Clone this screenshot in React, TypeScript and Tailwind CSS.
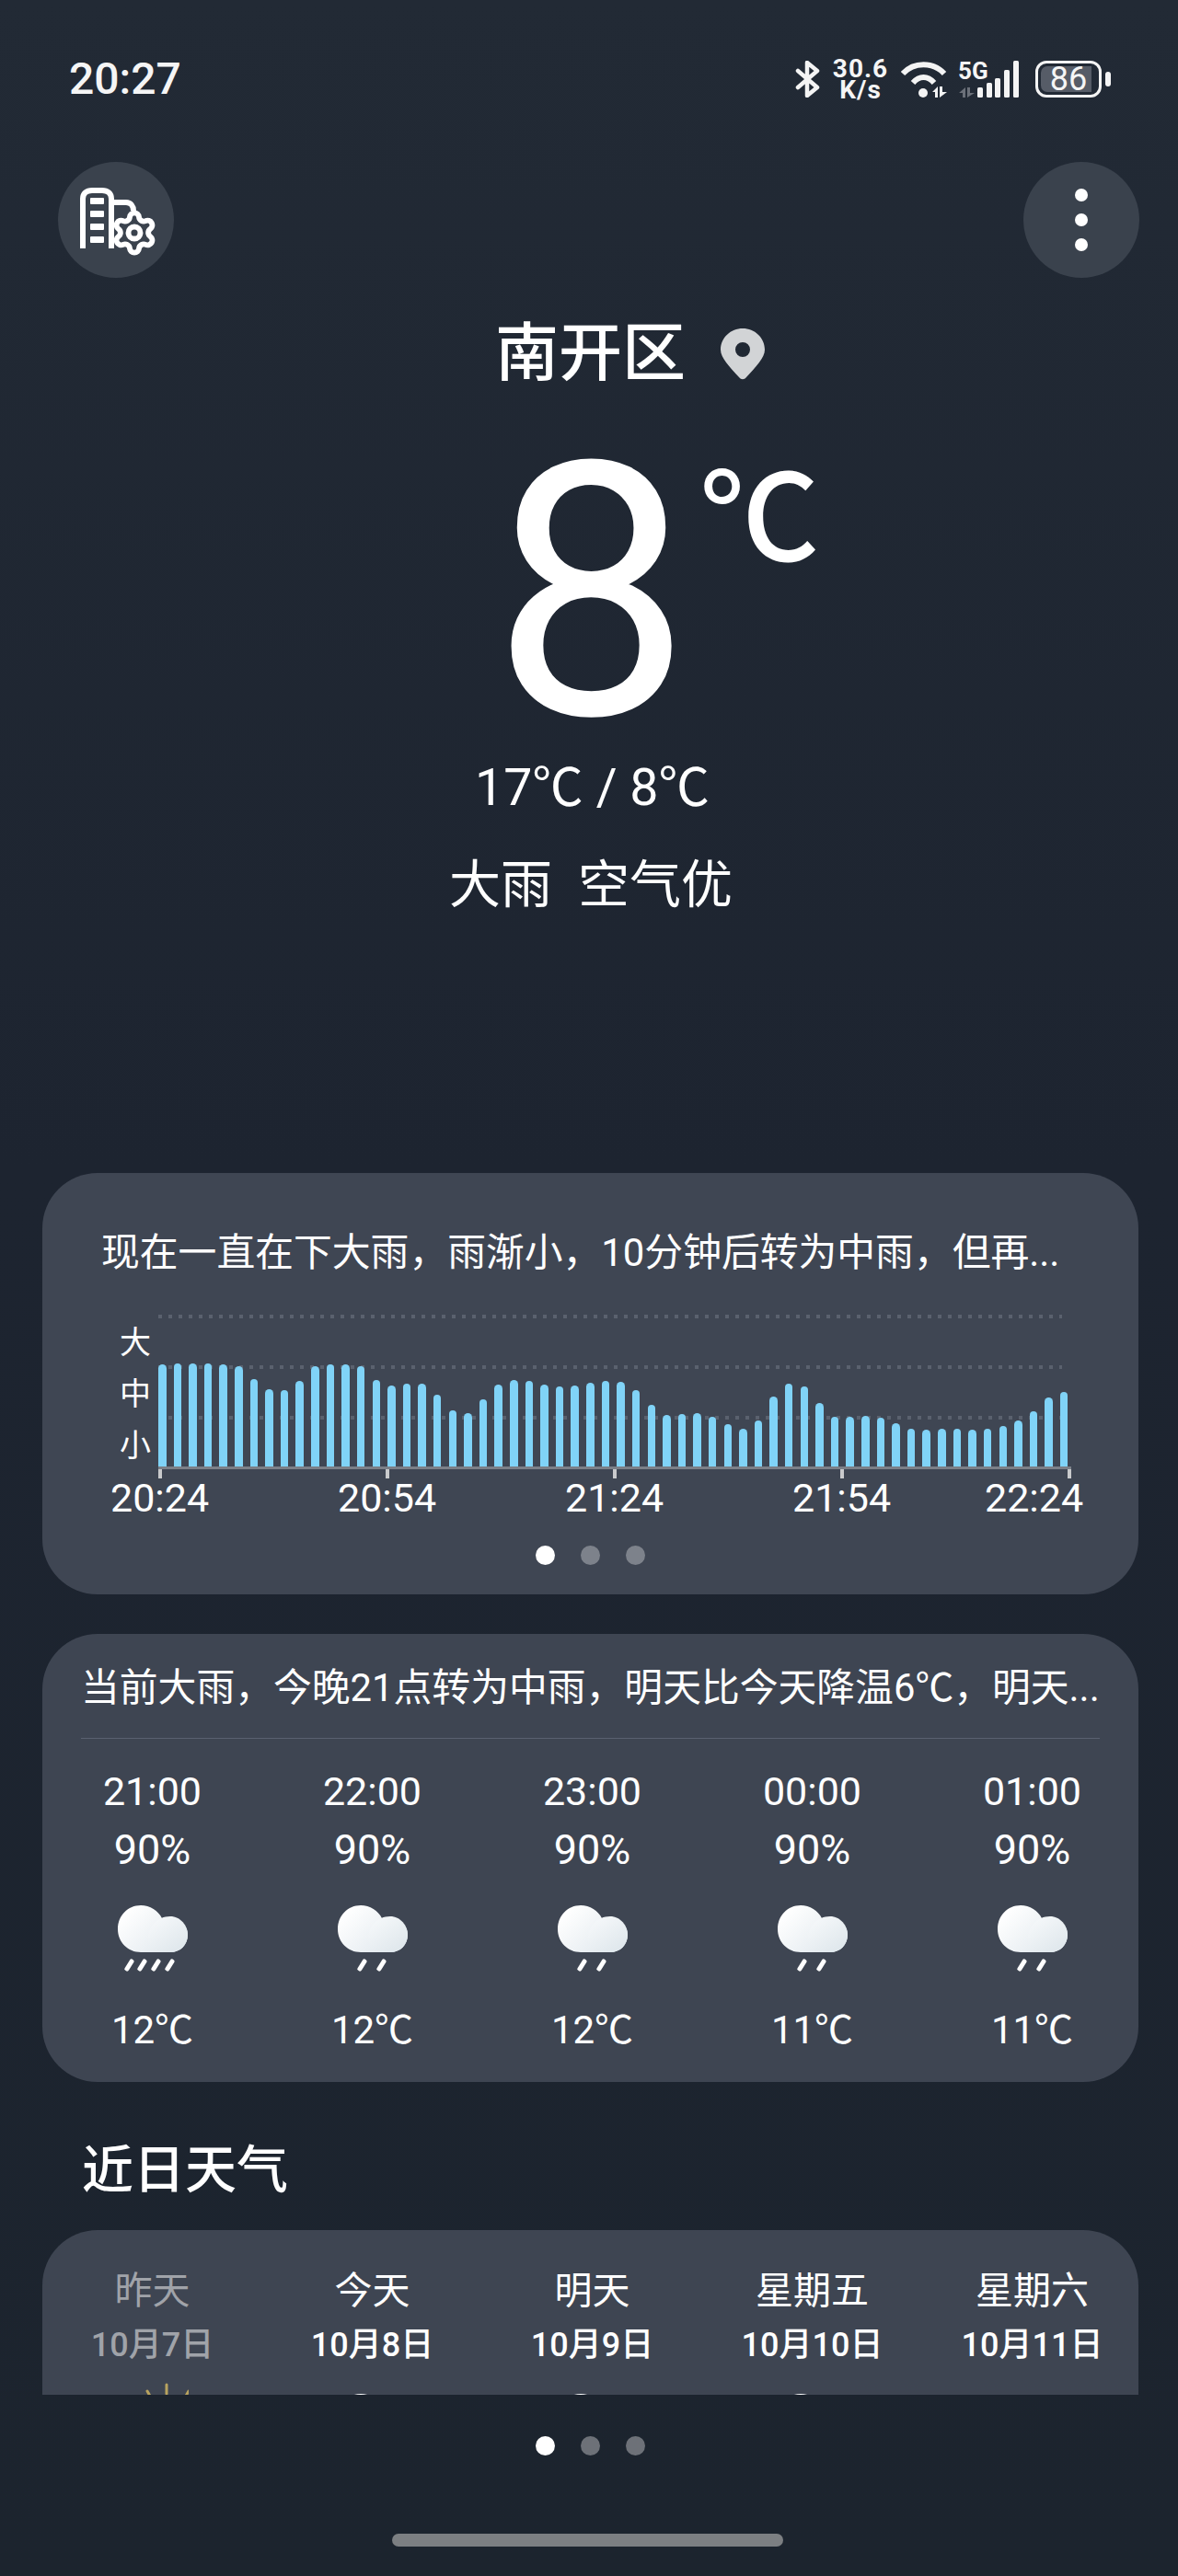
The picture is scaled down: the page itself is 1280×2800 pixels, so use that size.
import { Settings } from "lucide-react";

const rainBars = [
  111, 112, 112, 112, 111, 109, 95, 84, 83, 93, 109, 111, 111, 109, 94, 88, 90, 90, 78, 61, 58, 73, 89, 94, 93, 89, 87, 88, 91, 93,
  92, 83, 67, 56, 57, 58, 54, 46, 41, 50, 76, 90, 87, 69, 54, 54, 55, 53, 47, 41, 40, 41, 41, 40, 41, 44, 50, 60, 75, 81,
];

const axisLabels = [
  { text: "20:24", cls: "ml-[74px]" },
  { text: "20:54", cls: "ml-[142px]" },
  { text: "21:24", cls: "ml-[142px]" },
  { text: "21:54", cls: "ml-[142px]" },
  { text: "22:24", cls: "ml-[104px]" },
];

const hours = [
  { time: "21:00", pop: "90%", temp: "12℃", drops: [16, 30, 45, 60] },
  { time: "22:00", pop: "90%", temp: "12℃", drops: [30, 51] },
  { time: "23:00", pop: "90%", temp: "12℃", drops: [30, 51] },
  { time: "00:00", pop: "90%", temp: "11℃", drops: [30, 51] },
  { time: "01:00", pop: "90%", temp: "11℃", drops: [30, 51] },
];

const days = [
  { name: "昨天", date: "10月7日", past: true, peek: "sun" },
  { name: "今天", date: "10月8日", past: false, peek: "cloud" },
  { name: "明天", date: "10月9日", past: false, peek: "cloud" },
  { name: "星期五", date: "10月10日", past: false, peek: "cloud" },
  { name: "星期六", date: "10月11日", past: false, peek: "" },
];

function CloudRain({ drops, id }: { drops: number[]; id: string }) {
  return (
    <svg width="78" height="73" viewBox="0 0 78 73" fill="none">
      <defs>
        <linearGradient id={`${id}a`} x1="10" y1="8" x2="52" y2="52" gradientUnits="userSpaceOnUse">
          <stop offset="0" stopColor="#ffffff" />
          <stop offset="1" stopColor="#e3eaef" />
        </linearGradient>
        <linearGradient id={`${id}b`} x1="42" y1="18" x2="66" y2="52" gradientUnits="userSpaceOnUse">
          <stop offset="0" stopColor="#f4f7f9" />
          <stop offset="1" stopColor="#dfe7ec" />
        </linearGradient>
      </defs>
      <path d="M26 52C12 52 1 41 1 27C1 12 12 1 26 1C36 1 45 7 49 15H58C69 15 77 23 77 33C77 44 69 52 58 52Z" fill={`url(#${id}a)`} />
      <path d="M58 52H39C36 48 34 43 34 37C34 24 44 13 58 13C69 13 77 23 77 33C77 44 69 52 58 52Z" fill={`url(#${id}b)`} />
      {drops.map((x) => (
        <line key={x} x1={x} y1="62" x2={x - 5} y2="70" stroke="#ffffff" strokeWidth="5" strokeLinecap="round" />
      ))}
    </svg>
  );
}

function CityIcon() {
  return (
    <svg width="126" height="126" viewBox="13 16 126 126" fill="none" className="text-white">
      <path d="M40 110V56C40 50 44 47 50 47H61C67 47 71 50 71 56V110" stroke="currentColor" strokeWidth="6" />
      <rect x="48" y="55" width="15" height="7" rx="1" fill="currentColor" />
      <rect x="48" y="69" width="15" height="7" rx="1" fill="currentColor" />
      <rect x="48" y="83" width="15" height="7" rx="1" fill="currentColor" />
      <rect x="48" y="97" width="15" height="7" rx="1" fill="currentColor" />
      <path d="M73 60H87C92 60 95 64 95 69" stroke="currentColor" strokeWidth="6" />
      <Settings x={70} y={67} width={52} height={52} strokeWidth={2.7} />
    </svg>
  );
}

function BluetoothIcon() {
  return (
    <svg width="27" height="40" viewBox="0 0 27 40" fill="none" stroke="#f4f4f4" strokeWidth="4.5" strokeLinejoin="round" strokeLinecap="round">
      <path d="M3 11L24 29L13 38V2L24 11L3 29" />
    </svg>
  );
}

function WifiIcon() {
  return (
    <svg width="50" height="40" viewBox="0 0 50 40" fill="none">
      <path d="M2 14C14 1 35 1 47 14" stroke="#f4f4f4" strokeWidth="6" />
      <path d="M13 24C20 16 29 16 36 24" stroke="#f4f4f4" strokeWidth="6" />
      <circle cx="24" cy="35" r="5" fill="#f4f4f4" />
      <path d="M34 34L40 28V40H37V34Z M42 28H45V34H50L42 40Z" fill="#f4f4f4" />
    </svg>
  );
}

function SignalIcon() {
  return (
    <svg width="66" height="41" viewBox="0 0 66 41" fill="none">
      <path d="M1 35L8 29V40H5V35Z M10 29H13V35H18L10 40Z" fill="#6b7079" />
      <rect x="21" y="29" width="6" height="11" rx="1.5" fill="#f4f4f4" />
      <rect x="31" y="24" width="6" height="16" rx="1.5" fill="#f4f4f4" />
      <rect x="40" y="19" width="6" height="21" rx="1.5" fill="#f4f4f4" />
      <rect x="50" y="10" width="6" height="30" rx="1.5" fill="#f4f4f4" />
      <rect x="60" y="0" width="6" height="40" rx="1.5" fill="#f4f4f4" />
    </svg>
  );
}

function PinIcon() {
  return (
    <svg width="48" height="56" viewBox="0 0 48 56" className="absolute left-[245px] top-[17px]">
      <path
        fillRule="evenodd"
        d="M24 0C37 0 48 10 48 23C48 32 38 42 28 53C25.5 56 22.5 56 20 53C10 42 0 32 0 23C0 10 11 0 24 0ZM24 15A8 8 0 1 0 24 31A8 8 0 1 0 24 15Z"
        fill="#d2d4d6"
      />
    </svg>
  );
}

function StatusBar() {
  return (
    <div className="h-[176px] flex items-start pl-[75px] pr-[73px] pt-[56px] text-[#f5f5f5]">
      <span className="text-[48px] leading-[60px] font-medium">20:27</span>
      <div className="ml-auto flex items-center h-[60px]">
        <BluetoothIcon />
        <div className="ml-[15px] w-[58px] flex flex-col items-center font-bold text-[28px] leading-[23px] tracking-[1px]">
          <span>30.6</span>
          <span>K/s</span>
        </div>
        <div className="ml-[15px]">
          <WifiIcon />
        </div>
        <div className="relative ml-[12px] w-[66px] h-[41px]">
          <span className="absolute left-0 -top-[1px] text-[26px] leading-[24px] font-bold">5G</span>
          <SignalIcon />
        </div>
        <div className="ml-[18px] w-[72px] h-[40px] rounded-[12px] border-[3px] border-[#f4f4f4] p-[3px] relative">
          <div className="w-[55px] h-full rounded-l-[7px] bg-[#565c67]" />
          <span className="absolute inset-0 text-center text-[36px] leading-[34px]">86</span>
        </div>
        <div className="ml-[4px] w-[6px] h-[16px] rounded-full bg-[#f4f4f4]" />
      </div>
    </div>
  );
}

function Dots({ muted }: { muted: string }) {
  return (
    <div className="flex gap-[28px]">
      <div className="w-[21px] h-[21px] rounded-full bg-white" />
      <div className={`w-[21px] h-[21px] rounded-full ${muted}`} />
      <div className={`w-[21px] h-[21px] rounded-full ${muted}`} />
    </div>
  );
}

function RainCard() {
  return (
    <div className="ml-[46px] mt-[278px] w-[1191px] h-[458px] rounded-[60px] bg-[#3f4653] pt-[57px]">
      <div className="pl-[64px] text-[41.8px] leading-[60px] whitespace-nowrap">现在一直在下大雨，雨渐小，10分钟后转为中雨，但再...</div>
      <div className="mt-[37px] h-[165px] flex">
        <div className="ml-[84px] mt-[2px] w-[34px] text-[34px] text-center">
          <div className="h-[56px] leading-[56px]">大</div>
          <div className="h-[56px] leading-[56px]">中</div>
          <div className="h-[56px] leading-[56px]">小</div>
        </div>
        <div className="relative ml-[8px] w-[989px] h-[165px] flex items-end justify-between">
          <div className="absolute left-0 top-0 w-[982px] h-[4px] bg-[repeating-linear-gradient(90deg,#5a616e_0_4px,transparent_4px_11px)]" />
          <div className="absolute left-0 top-[55px] w-[982px] h-[4px] bg-[repeating-linear-gradient(90deg,#5a616e_0_4px,transparent_4px_11px)]" />
          <div className="absolute left-0 top-[110px] w-[982px] h-[4px] bg-[repeating-linear-gradient(90deg,#5a616e_0_4px,transparent_4px_11px)]" />
          {rainBars.map((h, i) => (
            <div key={i} className="relative w-[8.5px] rounded-t-full bg-[#80d3f7]" style={{ height: h }} />
          ))}
        </div>
      </div>
      <div className="ml-[126px] w-[992px] h-[3px] bg-[#7b8088]" />
      <div className="ml-[126px] w-[992px] h-[10px] flex justify-between">
        {[0, 1, 2, 3, 4].map((i) => (
          <div key={i} className="w-[4px] h-[10px] bg-[#c9cacc]" />
        ))}
      </div>
      <div className="flex h-[50px] text-[43px] leading-[50px] -mt-[4px]">
        {axisLabels.map((l) => (
          <span key={l.text} className={`w-[105px] text-center ${l.cls}`}>
            {l.text}
          </span>
        ))}
      </div>
      <div className="mt-[27px] ml-[536px]">
        <Dots muted="bg-[#7d828b]" />
      </div>
    </div>
  );
}

function HourlyCard() {
  return (
    <div className="ml-[46px] mt-[43px] w-[1191px] h-[487px] rounded-[60px] bg-[#3e4552] pt-[29px]">
      <div className="pl-[42px] text-[41.8px] leading-[60px] whitespace-nowrap">当前大雨，今晚21点转为中雨，明天比今天降温6℃，明天...</div>
      <div className="mt-[24px] mx-[42px] h-px bg-[#5a6170]" />
      <div className="w-[1195px] mt-[27px] flex">
        {hours.map((h) => (
          <div key={h.time} className="w-[239px] flex flex-col items-center">
            <div className="text-[43px] leading-[60px]">{h.time}</div>
            <div className="text-[45px] leading-[60px] mt-[4px]">{h.pop}</div>
            <div className="mt-[29px] h-[73px]">
              <CloudRain drops={h.drops} id={`c${h.time.slice(0, 2)}`} />
            </div>
            <div className="text-[42px] leading-[60px] mt-[34px]">{h.temp}</div>
          </div>
        ))}
      </div>
    </div>
  );
}

function DailyCard() {
  return (
    <div className="ml-[46px] mt-[25px] w-[1191px] h-[179px] overflow-hidden rounded-t-[60px] bg-[#3e4552] pt-[38px]">
      <div className="w-[1195px] flex">
        {days.map((d) => (
          <div key={d.date} className={`w-[239px] flex flex-col items-center ${d.past ? "text-[#a0a3a9]" : "text-white"}`}>
            <div className="text-[41px] leading-[56px]">{d.name}</div>
            <div className="mt-[6px] text-[36px] leading-[50px] font-medium">{d.date}</div>
            <div className="h-[60px]">
              {d.peek === "sun" && (
                <svg width="78" height="30" viewBox="0 0 78 30" className="mt-[16px]" fill="none" stroke="#b8a35f" strokeWidth="3" strokeLinecap="round">
                  <line x1="54" y1="2" x2="54" y2="12" />
                  <line x1="33" y1="9" x2="37" y2="16" />
                  <line x1="78" y1="9" x2="74" y2="16" />
                </svg>
              )}
              {d.peek === "cloud" && (
                <div className="mt-[27px]">
                  <CloudRain drops={[]} id={`d${d.date}`} />
                </div>
              )}
            </div>
          </div>
        ))}
      </div>
    </div>
  );
}

export default function App() {
  return (
    <div className="w-[1280px] h-[2800px] overflow-hidden flex flex-col text-white font-[Roboto,'Noto_Sans_CJK_SC',sans-serif] bg-[linear-gradient(180deg,#222a35_0,#1d2430_1270px,#1c242e_100%)]">
      <StatusBar />

      <div className="h-[126px] flex justify-between pl-[63px] pr-[42px]">
        <div className="w-[126px] h-[126px] rounded-full bg-[#3a424d] flex items-center justify-center">
          <CityIcon />
        </div>
        <div className="w-[126px] h-[126px] rounded-full bg-[#3a424d] flex flex-col items-center justify-center gap-[13px]">
          <div className="w-[14px] h-[14px] rounded-full bg-white" />
          <div className="w-[14px] h-[14px] rounded-full bg-white" />
          <div className="w-[14px] h-[14px] rounded-full bg-white" />
        </div>
      </div>

      <div className="flex flex-col items-center">
        <div className="relative mt-[38px] ml-[3px] text-[69px] leading-[90px] font-medium">
          南开区
          <PinIcon />
        </div>
        <div className="relative mt-[65px] ml-[5px] text-[385px] leading-[300px]">
          8
          <span className="absolute left-[226px] -top-[5px] text-[130px] leading-[150px] font-medium">℃</span>
        </div>
        <div className="mt-[27px] ml-[7px] text-[55.5px] leading-[70px]">17℃ / 8℃</div>
        <div className="mt-[35px] ml-[4px] text-[56px] leading-[70px] whitespace-pre">大雨  空气优</div>
      </div>

      <RainCard />
      <HourlyCard />

      <div className="mt-[56px] ml-[89px] text-[56px] leading-[80px] font-medium">近日天气</div>
      <DailyCard />

      <div className="mt-[45px] ml-[582px]">
        <Dots muted="bg-[#6d7178]" />
      </div>
      <div className="mt-[85px] ml-[426px] w-[425px] h-[14px] rounded-full bg-[#7c7f82]" />
    </div>
  );
}
